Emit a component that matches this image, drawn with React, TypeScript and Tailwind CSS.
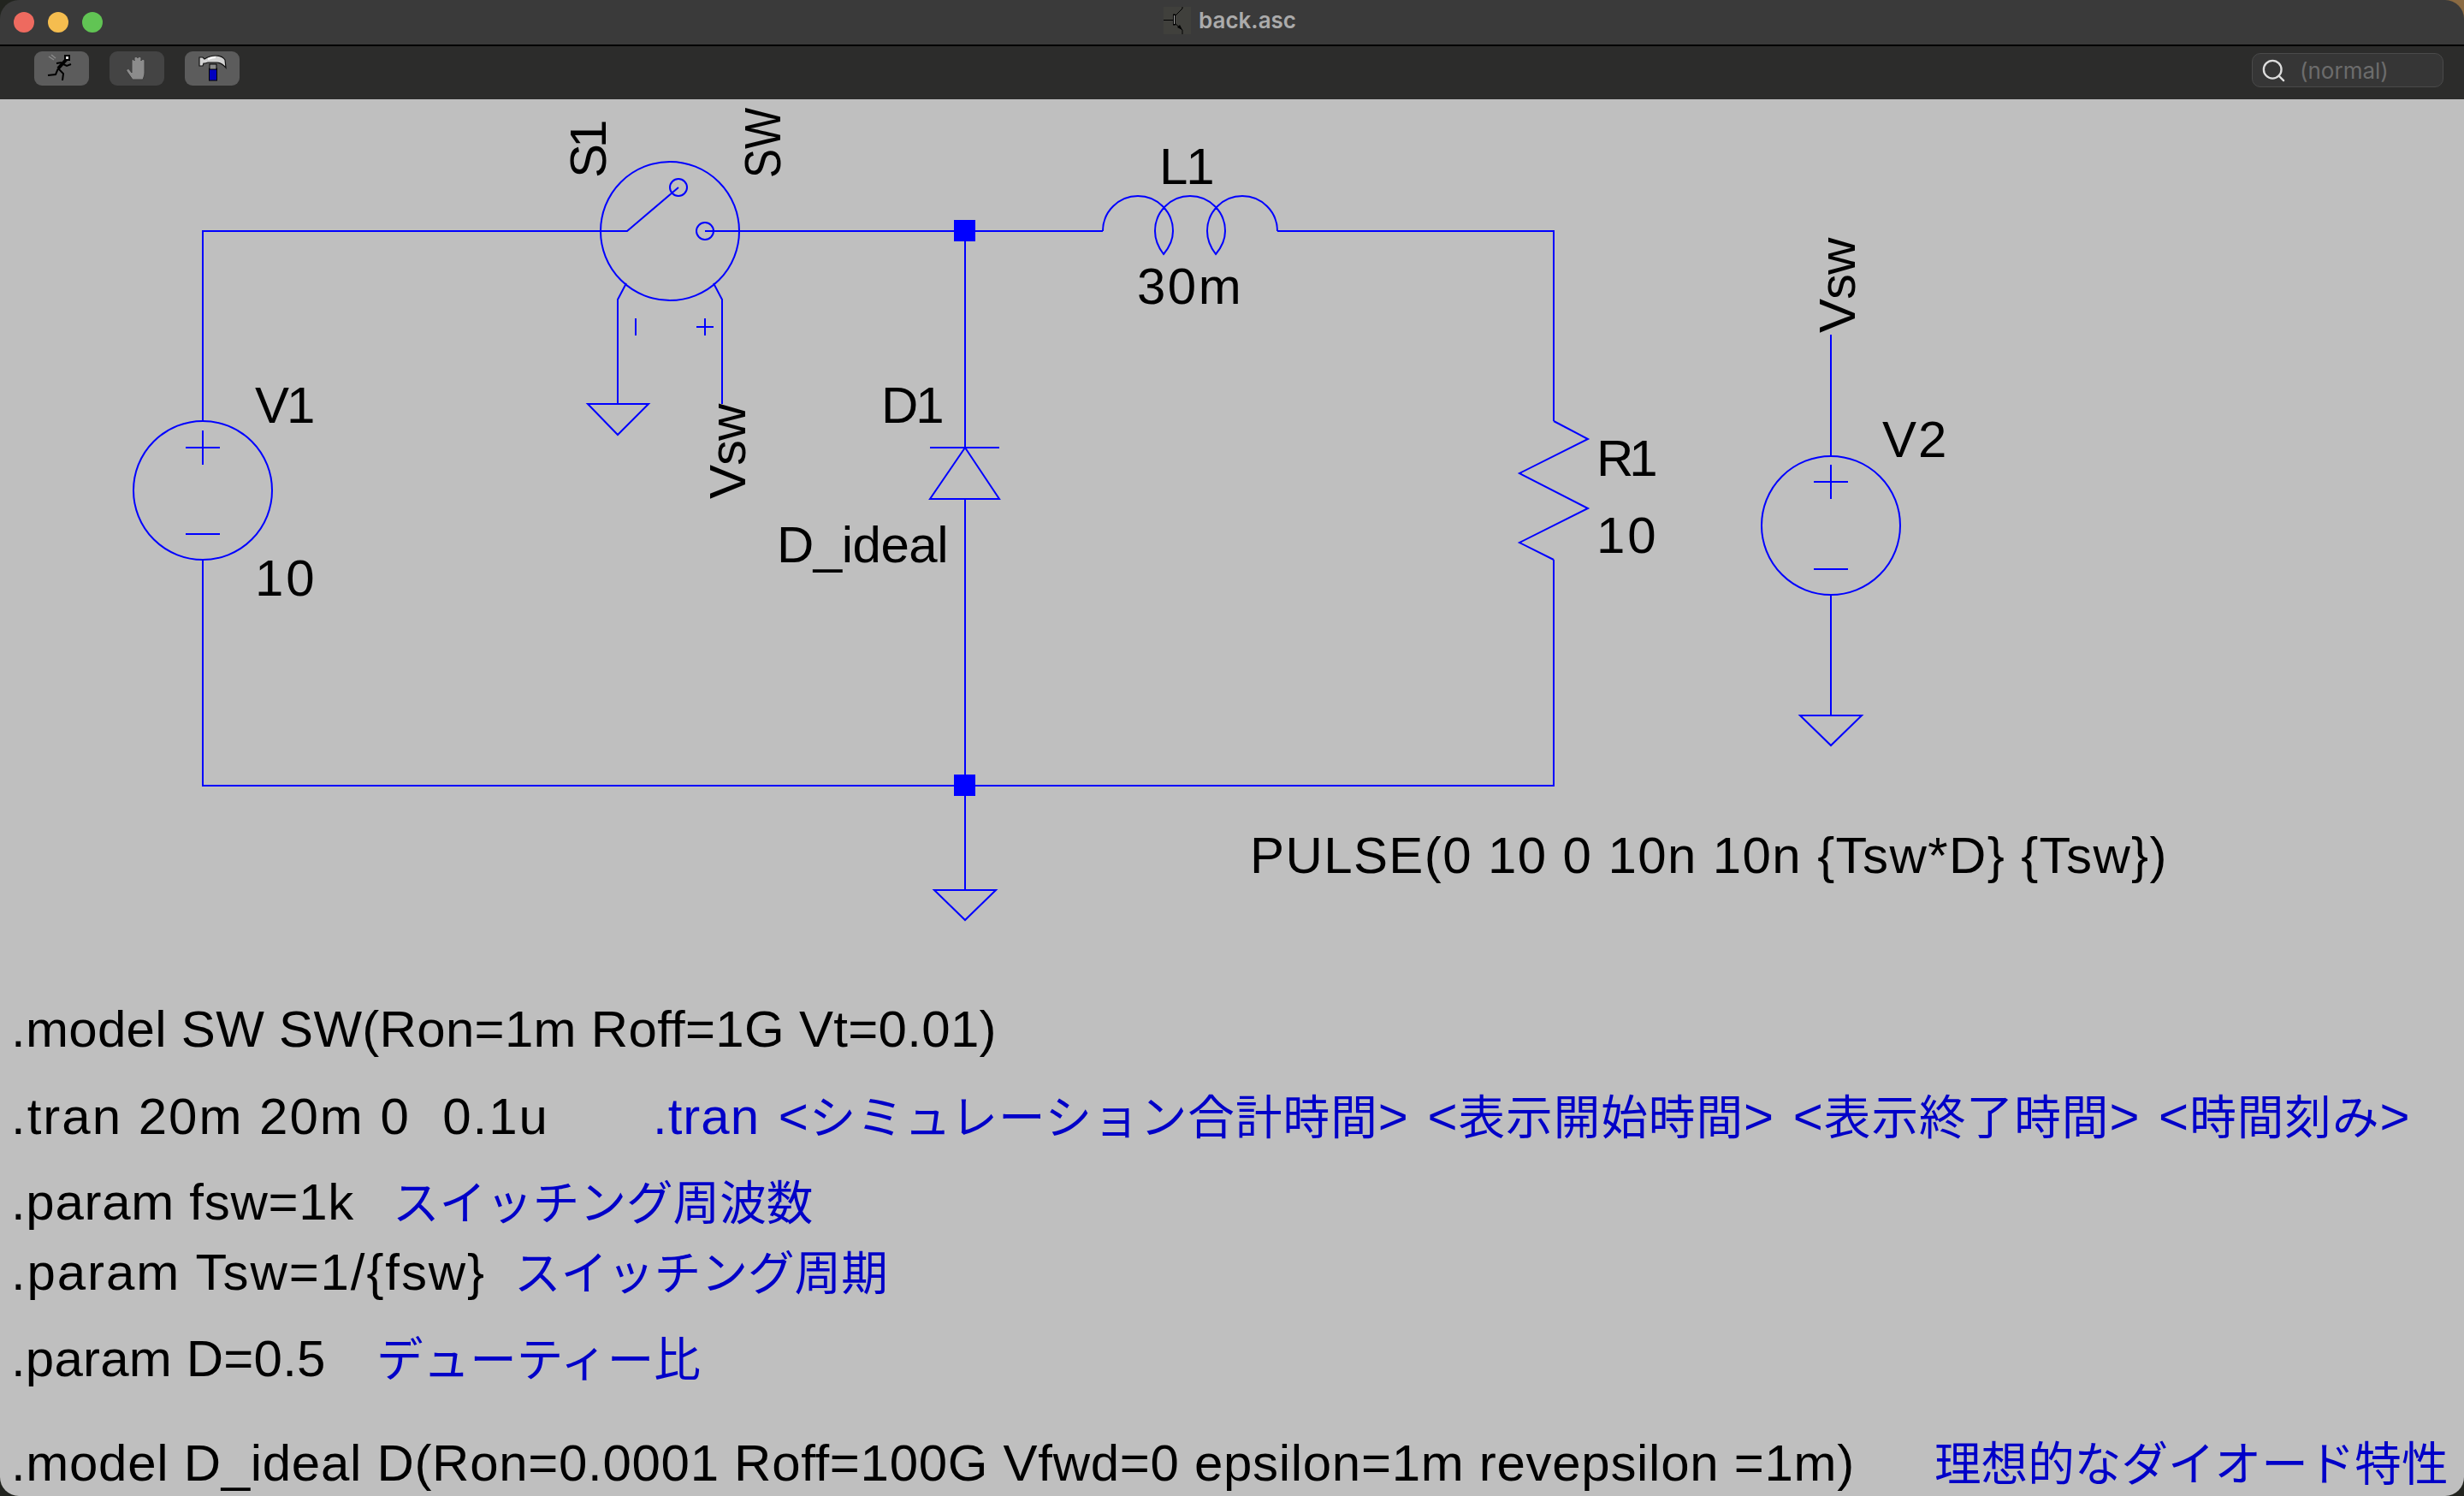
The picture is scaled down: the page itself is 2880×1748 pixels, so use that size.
import { Search } from "lucide-react";

const wire = "#0000ff";

const Runner = () => (
    <svg width="64" height="40" viewBox="0 0 64 40" fill="none">
        <path d="M17 6l6 4M20 4l5 4" stroke="#8a8a8a" strokeWidth="1.5" />
        <path d="M38 9L28 20" stroke="#000" strokeWidth="4" />
        <path d="M32 14l6 3 5-2M32 13l-6 1M28 20l-3 7-9 1M28 20l6 6-1 8" stroke="#000" strokeWidth="2" />
        <rect x="35" y="4" width="7" height="7" fill="#000" />
        <rect x="37" y="6" width="3" height="3" fill="#ddd" />
    </svg>
);

const Hand = () => (
    <svg width="64" height="40" viewBox="0 0 64 40">
        <path
            d="M27 33l-7-10c-1-2 2-3 3-2l3 4V11c0-2 3-2 3 0v-3c0-2 4-2 4 0v0c0-2 4-2 4 0v3c0-2 4-2 4 0v14c0 3-1 5-2 8z"
            fill="#8c8c8c"
            stroke="#3c3c3c"
            strokeWidth="1"
        />
    </svg>
);

const Hammer = () => (
    <svg width="64" height="40" viewBox="0 0 64 40">
        <rect x="28.5" y="20" width="9" height="14" fill="#0000c0" stroke="#000" strokeWidth="1" />
        <rect x="29" y="15" width="8" height="6" fill="#8a8a8a" stroke="#000" strokeWidth="1" />
        <path d="M17 7h4l2 2q6-4 13-4q8 0 11 5l1 9q-5-6-11-6H27l-3 1h-2l-1 3h-4z" fill="#d2d2d2" stroke="#111" strokeWidth="1.2" />
        <path d="M27 9q5-2 9-2" stroke="#fff" strokeWidth="2" fill="none" />
    </svg>
);

const TitleIcon = () => (
    <svg width="32" height="32" viewBox="0 0 32 32" className="bg-[#40403c]">
        <path d="M0 15.5h11M13 11l9-9V0M13 19l9 8v5" stroke="#000" strokeWidth="1" fill="none" />
        <rect x="11.5" y="9" width="2" height="12" fill="#aaa" stroke="#000" strokeWidth="1" />
        <path d="M22 27l-6-3 3-3z" fill="#000" />
    </svg>
);

const ToolButton = ({ children, active }: { children: React.ReactNode; active?: boolean }) => (
    <div className={active ? "w-[64px] h-[40px] rounded-[9px] bg-[#5c5c5c]" : "w-[64px] h-[40px] rounded-[9px] bg-[#444444]"}>
        {children}
    </div>
);

const Schematic = () => (
    <svg className="absolute inset-0 w-[2880px] h-[1056px]" viewBox="0 116 2880 1056" fill="none" stroke={wire} strokeWidth="2">
        {/* wires */}
        <path d="M237 492V270H702M865 270H1289M1493 270H1816V492M1816 654V918H237V654" />
        <path d="M1128 270V523M1128 583V1040" />
        <path d="M2140 391V533M2140 695V836" />

        {/* junctions */}
        <rect x="1115" y="257" width="25" height="25" fill={wire} stroke="none" />
        <rect x="1115" y="905" width="25" height="25" fill={wire} stroke="none" />

        {/* V1 */}
        <circle cx="237" cy="573" r="81" />
        <path d="M217 523h40M237 503v40M217 624h40" />

        {/* V2 */}
        <circle cx="2140" cy="614" r="81" />
        <path d="M2120 563h40M2140 543v40M2120 665h40" />
        <path d="M2104 836h72l-36 35z" />

        {/* S1 */}
        <circle cx="783" cy="270" r="81" />
        <circle cx="793" cy="219" r="10" />
        <circle cx="824" cy="270" r="10" />
        <path d="M702 270H733L793 219M824 270H865" />
        <path d="M732 331L722 350V472M834 331L844 350V472" />
        <path d="M743 372v20M814 382h20M824 372v20" />
        <path d="M687 472h71l-36 36z" />

        {/* L1 */}
        <path d="M1289 270A41 41 0 0 1 1371 270Q1371 284 1360 297Q1350 284 1350 270A41 41 0 0 1 1432 270Q1432 284 1421 297Q1411 284 1411 270A41 41 0 0 1 1493 270" />

        {/* D1 */}
        <path d="M1087 523h81M1128 523l40 60h-81z" />

        {/* R1 */}
        <path d="M1816 492L1856 513 1776 553 1856 594 1776 634 1816 654" />

        {/* gnd */}
        <path d="M1092 1040h72l-36 35z" />
    </svg>
);

const Label = ({ className, children }: { className: string; children: React.ReactNode }) => (
    <div className={"absolute text-black whitespace-pre text-[60px] leading-none " + className}>{children}</div>
);

const Jp = ({ children }: { children: React.ReactNode }) => <span className="text-[54.6px]">{children}</span>;

const Note = ({ className, children }: { className: string; children: React.ReactNode }) => (
    <div className={"text-[#0000c8] whitespace-pre " + className}>{children}</div>
);

const App = () => {
    return (
        <div className="w-[2880px] h-[1748px] bg-[#22241f] relative overflow-hidden">
            <div className="absolute right-0 top-0 w-[24px] h-[24px] bg-[#8a6a42]" />
            <div className="relative w-full h-full flex flex-col rounded-[22px] overflow-hidden font-['Liberation_Sans','Noto_Sans_CJK_JP',sans-serif]">
                {/* title bar */}
                <div className="h-[54px] shrink-0 bg-[#3a3a3a] border-b-2 border-black flex items-center relative">
                    <div className="flex gap-[16px] pl-[16px]">
                        <div className="w-[24px] h-[24px] rounded-full bg-[#ee6a5f]" />
                        <div className="w-[24px] h-[24px] rounded-full bg-[#f5bd4f]" />
                        <div className="w-[24px] h-[24px] rounded-full bg-[#61c454]" />
                    </div>
                    <div className="absolute left-[1360px] top-[8px] flex items-center gap-[9px]">
                        <TitleIcon />
                        <span className="font-['Inter',sans-serif] font-semibold text-[26px] leading-[32px] text-[#ababab]">back.asc</span>
                    </div>
                </div>

                {/* toolbar */}
                <div className="h-[62px] shrink-0 bg-[#2c2c2b] flex items-start justify-between pt-[6px] pl-[40px] pr-[24px]">
                    <div className="flex gap-[24px]">
                        <ToolButton active><Runner /></ToolButton>
                        <ToolButton><Hand /></ToolButton>
                        <ToolButton active><Hammer /></ToolButton>
                    </div>
                    <div className="w-[224px] h-[40px] mt-[2px] rounded-[10px] border border-[#4a4a4a] bg-[#363636] flex items-center pl-[9px] gap-[15px]">
                        <Search size={31} strokeWidth={1.8} className="text-[#dddddd]" />
                        <span className="font-['Inter',sans-serif] text-[26px] text-[#6c6c6c]">(normal)</span>
                    </div>
                </div>

                {/* canvas */}
                <div className="flex-1 bg-[#bfbfbf] flex flex-col">
                    <div className="relative h-[1056px] shrink-0">
                        <Schematic />
                        <Label className="left-[298px] top-[328px] tracking-[-3px]">V1</Label>
                        <Label className="left-[298px] top-[530px] tracking-[3px]">10</Label>
                        <Label className="left-[1355px] top-[49px] tracking-[-2px]">L1</Label>
                        <Label className="left-[1329px] top-[189px] tracking-[2.5px]">30m</Label>
                        <Label className="left-[1030px] top-[328px] tracking-[-3px]">D1</Label>
                        <Label className="left-[908px] top-[491px] tracking-[-0.5px]">D_ideal</Label>
                        <Label className="left-[1866px] top-[390px] tracking-[-5px]">R1</Label>
                        <Label className="left-[1866px] top-[480px] tracking-[3px]">10</Label>
                        <Label className="left-[2200px] top-[368px] tracking-[2px]">V2</Label>
                        <Label className="left-[1461px] top-[854px] tracking-[1.4px]">{"PULSE(0 10 0 10n 10n {Tsw*D} {Tsw})"}</Label>
                        <Label className="left-[658px] top-[92px] tracking-[-5px] -rotate-90 origin-top-left">S1</Label>
                        <Label className="left-[862px] top-[92px] scale-x-[0.85] -rotate-90 origin-top-left">SW</Label>
                        <Label className="left-[821px] top-[467px] tracking-[-1px] -rotate-90 origin-top-left">Vsw</Label>
                        <Label className="left-[2118px] top-[273px] tracking-[-1px] -rotate-90 origin-top-left">Vsw</Label>
                    </div>

                    {/* directives */}
                    <div className="flex flex-col mt-[1px] pl-[13px] text-[60px] leading-[60px] text-black whitespace-pre">
                        <div className="h-[60px] tracking-[0.3px]">.model SW SW(Ron=1m Roff=1G Vt=0.01)</div>
                        <div className="flex items-baseline h-[60px] mt-[42px]">
                            <div className="w-[750px] tracking-[2px]">.tran 20m 20m 0  0.1u</div>
                            <Note className="tracking-[1px] [word-spacing:4px]">
                                .tran &lt;<Jp>シミュレーション合計時間</Jp>&gt; &lt;<Jp>表示開始時間</Jp>&gt; &lt;<Jp>表示終了時間</Jp>&gt; &lt;<Jp>時間刻み</Jp>&gt;
                            </Note>
                        </div>
                        <div className="flex items-baseline h-[60px] mt-[40px]">
                            <div className="w-[446px] tracking-[0.7px]">.param fsw=1k</div>
                            <Note className=""><Jp>スイッチング周波数</Jp></Note>
                        </div>
                        <div className="flex items-baseline h-[60px] mt-[22px]">
                            <div className="w-[588px] tracking-[1.9px]">{".param Tsw=1/{fsw}"}</div>
                            <Note className=""><Jp>スイッチング周期</Jp></Note>
                        </div>
                        <div className="flex items-baseline h-[60px] mt-[41px]">
                            <div className="w-[427px] tracking-[0.2px]">.param D=0.5</div>
                            <Note className=""><Jp>デューティー比</Jp></Note>
                        </div>
                        <div className="flex items-baseline h-[60px] mt-[62px]">
                            <div className="w-[2248px] tracking-[0.7px]">.model D_ideal D(Ron=0.0001 Roff=100G Vfwd=0 epsilon=1m revepsilon =1m)</div>
                            <Note className=""><Jp>理想的なダイオード特性</Jp></Note>
                        </div>
                    </div>
                </div>
            </div>
        </div>
    );
};

export default App;
